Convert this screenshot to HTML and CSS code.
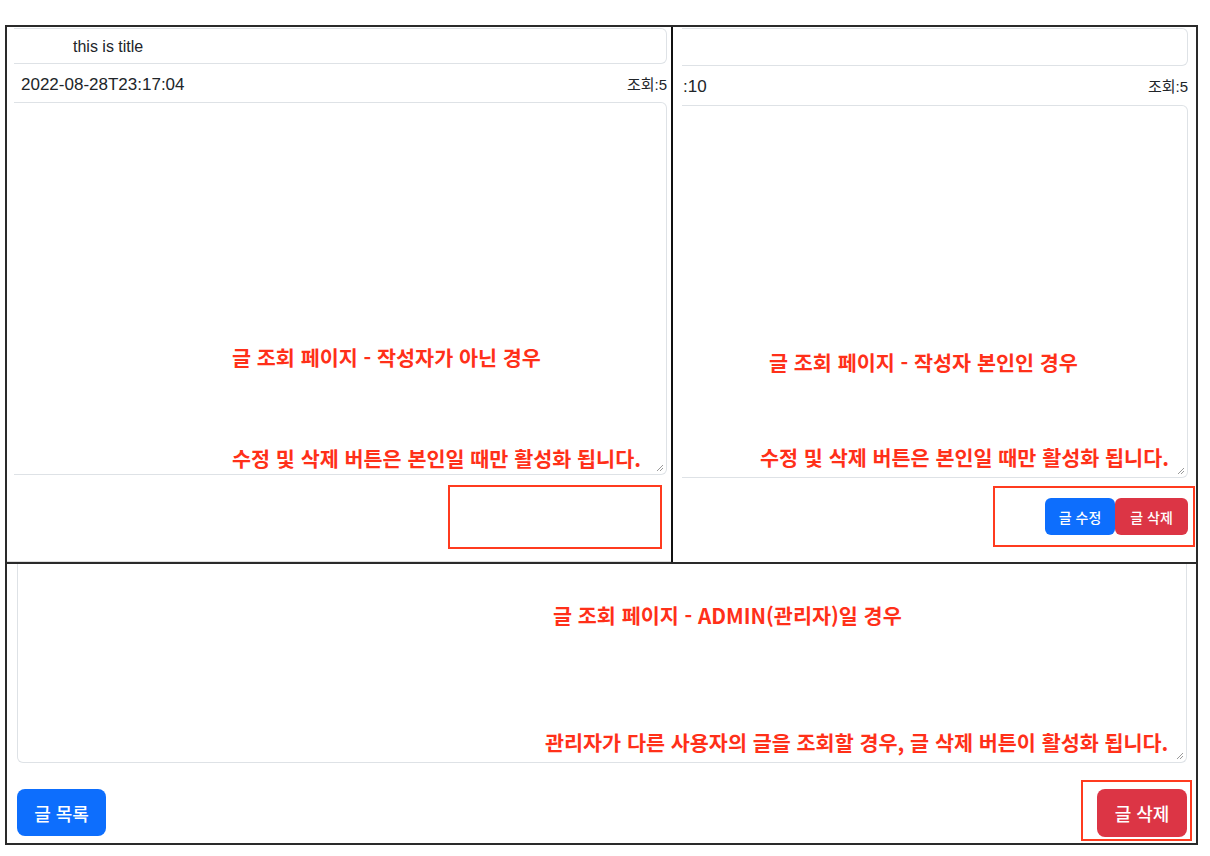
FILE: index.html
```html
<!DOCTYPE html>
<html lang="ko">
<head>
    <meta charset="UTF-8">
    <meta name="viewport" content="width=device-width, initial-scale=1.0">
    <title>글 조회 페이지</title>
    <link rel="stylesheet" href="styles.css">
</head>
<body>
    <div class="frame">
        <!-- 작성자가 아닌 경우 -->
        <div class="shot shot-a">
            <div class="title-input">this is title</div>
            <div class="meta">
                <span class="date">2022-08-28T23:17:04</span>
                <span class="hits">조회:5</span>
            </div>
            <div class="content">
                <p class="note note-a1">글 조회 페이지 - 작성자가 아닌 경우</p>
                <p class="note note-a2">수정 및 삭제 버튼은 본인일 때만 활성화 됩니다.</p>
                <svg class="grip" width="8" height="8" viewBox="0 0 8 8"><path d="M1 7L7 1M4 7L7 4" stroke="#9a9a9a" stroke-width="1"/></svg>
            </div>
            <div class="actions">
                <div class="mark mark-empty"></div>
            </div>
        </div>

        <!-- 작성자 본인인 경우 -->
        <div class="shot shot-b">
            <div class="title-input"></div>
            <div class="meta">
                <span class="date">:10</span>
                <span class="hits">조회:5</span>
            </div>
            <div class="content">
                <p class="note note-b1">글 조회 페이지 - 작성자 본인인 경우</p>
                <p class="note note-b2">수정 및 삭제 버튼은 본인일 때만 활성화 됩니다.</p>
                <svg class="grip" width="8" height="8" viewBox="0 0 8 8"><path d="M1 7L7 1M4 7L7 4" stroke="#9a9a9a" stroke-width="1"/></svg>
            </div>
            <div class="actions">
                <div class="mark mark-owner">
                    <button class="btn btn-sm btn-primary">글 수정</button>
                    <button class="btn btn-sm btn-danger">글 삭제</button>
                </div>
            </div>
        </div>

        <!-- ADMIN 인 경우 -->
        <div class="shot shot-c">
            <div class="content">
                <p class="note note-c1">글 조회 페이지 - ADMIN(관리자)일 경우</p>
                <p class="note note-c2">관리자가 다른 사용자의 글을 조회할 경우, 글 삭제 버튼이 활성화 됩니다.</p>
                <svg class="grip" width="8" height="8" viewBox="0 0 8 8"><path d="M1 7L7 1M4 7L7 4" stroke="#9a9a9a" stroke-width="1"/></svg>
            </div>
            <div class="footer">
                <button class="btn btn-lg btn-primary">글 목록</button>
                <div class="mark mark-admin">
                    <button class="btn btn-lg btn-danger">글 삭제</button>
                </div>
            </div>
        </div>
    </div>
</body>
</html>
```

FILE: styles.css
```css
*{
    margin: 0;
    padding: 0;
    box-sizing: border-box;
}
body{
    background: #fff;
    color: #212529;
    font-family: "Liberation Sans", "Noto Sans CJK KR", sans-serif;
}
.frame{
    width: 1193px;
    height: 820px;
    margin: 25px 0 0 5px;
    border: 2px solid #2a2a2a;
    display: grid;
    grid-template-columns: 664px 1fr;
    grid-template-rows: 535px 1fr;
}
.shot{
    overflow: hidden;
    display: flex;
    flex-direction: column;
}
.shot-a{
    border-bottom: 1px solid #dcdcdc;
}
.shot-b{
    border-left: 2px solid #111;
}
.shot-c{
    grid-column: 1 / 3;
    border-top: 2px solid #2a2a2a;
}

/* 제목 / 작성일 / 조회수 */
.title-input{
    height: 36px;
    margin: 1px 4px 0 7px;
    padding: 1px 0 0 59px;
    border: 1px solid #dee2e6;
    border-left: none;
    border-radius: 0 6px 6px 0;
    font-size: 16px;
    line-height: 34px;
}
.shot-b .title-input{
    height: 38px;
    margin: 1px 8px 0 9px;
}
.meta{
    height: 38px;
    display: flex;
    align-items: center;
    justify-content: space-between;
    padding: 4px 4px 0 14px;
    font-size: 17px;
}
.shot-b .meta{
    height: 39px;
    padding: 3px 8px 0 10px;
}
.hits{
    font-size: 15px;
    margin-bottom: 4px;
}

/* 본문 textarea */
.content{
    position: relative;
    height: 373px;
    margin: 0 4px 0 7px;
    border: 1px solid #dee2e6;
    border-left: none;
    border-radius: 0 6px 6px 0;
}
.shot-b .content{
    margin: 0 8px 0 9px;
}
.shot-c .content{
    height: 199px;
    margin: 0 9px 0 10px;
    border: 1px solid #dee2e6;
    border-top: none;
    border-radius: 0 0 6px 6px;
}
.grip{
    position: absolute;
    right: 2px;
    bottom: 2px;
}
.note{
    font-family: "Noto Sans CJK KR", sans-serif;
    font-weight: 700;
    font-size: 20.7px;
    line-height: 28px;
    color: #ff3019;
    white-space: nowrap;
}
.note-a1{ margin: 240px 0 0 218px; }
.note-a2{ margin: 73px 0 0 218px; }
.note-b1{ margin: 242px 0 0 87px; }
.note-b2{ margin: 67px 0 0 78px; }
.note-c1{ margin: 37px 0 0 535px; }
.note-c2{ margin: 99px 0 0 527px; }

/* 버튼 영역 */
.actions{
    display: flex;
    justify-content: flex-end;
}
.mark{
    border: 2px solid #ff3b1f;
}
.mark-empty{
    width: 214px;
    height: 64px;
    margin: 10px 9px 0 0;
}
.mark-owner{
    width: 202px;
    height: 61px;
    margin: 8px 1px 0 0;
    padding: 10px 5px 0 0;
    display: flex;
    justify-content: flex-end;
    align-items: flex-start;
}
.footer{
    display: flex;
    justify-content: space-between;
    align-items: flex-start;
    margin-top: 17px;
    padding: 0 4px 0 10px;
}
.mark-admin{
    width: 111px;
    height: 61px;
    padding: 7px 3px 0 14px;
}
.btn{
    border: none;
    color: #fff;
    font-family: "Noto Sans CJK KR", sans-serif;
    font-weight: 500;
    cursor: pointer;
}
.btn-sm{
    height: 37px;
    padding: 0 10px;
    font-size: 14px;
    border-radius: 6px;
}
.btn-sm.btn-primary{
    width: 70px;
}
.btn-sm.btn-danger{
    width: 73px;
}
.btn-lg{
    height: 47px;
    width: 89px;
    font-size: 18px;
    border-radius: 8px;
}
.btn-lg.btn-danger{
    width: 90px;
    height: 48px;
}
.shot-c .footer > .btn-lg{
    margin-top: 9px;
}
.btn-primary{
    background-color: #0d6efd;
}
.btn-danger{
    background-color: #dc3545;
}
```
